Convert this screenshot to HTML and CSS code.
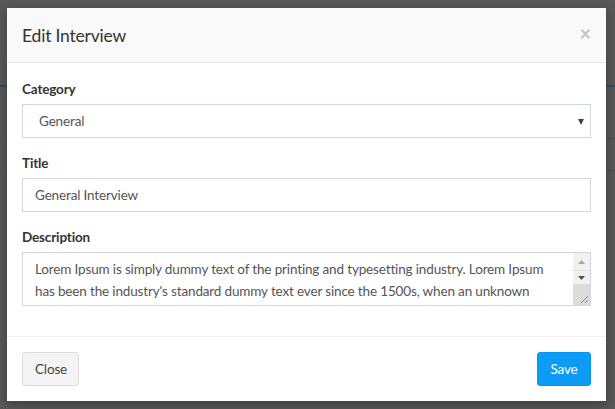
FILE: index.html
```html
<!DOCTYPE html>
<html lang="en">
<head>
<meta charset="utf-8">
<title>Edit Interview</title>
<link rel="stylesheet" href="styles.css">
</head>
<body>
<div class="backdrop">
  <div class="modal">
    <div class="modal-header">
      <h4 class="modal-title">Edit Interview</h4>
      <span class="close">&times;</span>
    </div>
    <div class="modal-body">
      <div class="form-group">
        <label class="label">Category</label>
        <div class="select-wrap">
          <select class="form-control select">
            <option>General</option>
          </select>
        </div>
      </div>
      <div class="form-group">
        <label class="label">Title</label>
        <input class="form-control" type="text" value="General Interview">
      </div>
      <div class="form-group">
        <label class="label">Description</label>
        <div class="textarea-wrap">
          <textarea class="form-control textarea">Lorem Ipsum is simply dummy text of the printing and typesetting industry. Lorem Ipsum has been the industry's standard dummy text ever since the 1500s, when an unknown printer took a galley of type and scrambled it to make a type specimen book. It has survived not only five centuries, but also the leap into electronic typesetting, remaining essentially unchanged.</textarea>
          <div class="scrollbar">
            <div class="sb-btn sb-up">
              <svg width="7" height="4" viewBox="0 0 7 4"><path d="M0 4 L3.5 0 L7 4 Z" fill="#a8a8a8"/></svg>
            </div>
            <div class="sb-btn sb-down">
              <svg width="7" height="4" viewBox="0 0 7 4"><path d="M0 0 L7 0 L3.5 4 Z" fill="#505050"/></svg>
            </div>
            <div class="sb-rest">
              <svg class="grip" width="9" height="9" viewBox="0 0 9 9"><path d="M1 8 L8 1 M5 8 L8 5" stroke="#8a8a8a" stroke-width="1" fill="none"/></svg>
            </div>
          </div>
        </div>
      </div>
    </div>
    <div class="modal-footer">
      <button class="btn btn-default">Close</button>
      <button class="btn btn-primary">Save</button>
    </div>
  </div>
</div>
</body>
</html>
```
FILE: styles.css
```css
html, body {
  margin: 0;
  padding: 0;
  height: 100%;
}
body {
  background-color: #575757;
  background-image:
    linear-gradient(#2f4b5a, #2f4b5a),
    linear-gradient(#505050, #505050),
    linear-gradient(#505050, #505050);
  background-size: 100% 2px, 100% 1px, 100% 1px;
  background-position: 0 85px, 0 138px, 0 170px;
  background-repeat: no-repeat;
  font-family: Lato, "Noto Sans", sans-serif;
  font-size: 13.5px;
  letter-spacing: -0.15px;
  color: #333;
}
.backdrop {
  padding: 8px 9px 8px 7px;
}
.modal {
  background: #fff;
  height: 393px;
  display: flex;
  flex-direction: column;
  box-shadow: 0 3px 9px rgba(0,0,0,0.3);
}
.modal-header {
  background: #f9f9f9;
  border-bottom: 1px solid #e8e8e8;
  height: 55px;
  box-sizing: border-box;
  padding: 0 15px;
  display: flex;
  align-items: center;
  justify-content: space-between;
}
.modal-title {
  margin: 0;
  font-size: 17.5px;
  font-weight: 400;
  letter-spacing: -0.2px;
  color: #333;
}
.close {
  font-size: 20px;
  font-weight: 700;
  color: #c4c4c4;
  line-height: 1;
  margin-top: -4px;
}
.modal-body {
  flex: 1;
  padding: 16px 15px 0;
  overflow: hidden;
}
.form-group {
  margin-bottom: 15px;
}
.label {
  display: block;
  font-weight: 700;
  font-size: 13.5px;
  line-height: 20px;
  margin-bottom: 5px;
  color: #333;
}
.form-control {
  display: block;
  width: 100%;
  box-sizing: border-box;
  height: 34px;
  border: 1px solid #d2d6de;
  border-radius: 0;
  background: #fff;
  padding: 6px 12px;
  font-family: inherit;
  font-size: 13.5px;
  letter-spacing: -0.15px;
  color: #555;
  outline: none;
  margin: 0;
}
.select-wrap {
  position: relative;
}
.select-wrap::after {
  content: "";
  position: absolute;
  right: 7px;
  top: 15px;
  border-left: 3.5px solid transparent;
  border-right: 3.5px solid transparent;
  border-top: 6px solid #444;
  pointer-events: none;
}
.select {
  -webkit-appearance: none;
  appearance: none;
  padding-left: 16px;
}
.textarea-wrap {
  position: relative;
}
.textarea {
  height: 54px;
  resize: none;
  line-height: 22px;
  padding: 5px 29px 5px 12px;
  overflow: hidden;
}
.scrollbar {
  position: absolute;
  top: 1px;
  right: 1px;
  bottom: 1px;
  width: 17px;
  display: flex;
  flex-direction: column;
  background: #f1f1f1;
}
.sb-btn {
  display: flex;
  align-items: center;
  justify-content: center;
}
.sb-up {
  height: 17px;
  border-bottom: 1px solid #e2e2e2;
}
.sb-down {
  height: 13px;
}
.sb-rest {
  flex: 1;
  background: #dcdcdc;
  display: flex;
  align-items: flex-end;
  justify-content: flex-end;
}
.grip {
  display: block;
  margin: 0 1px 1px 0;
}
.modal-footer {
  border-top: 1px solid #f0f0f0;
  padding: 15px;
  display: flex;
  justify-content: space-between;
}
.btn {
  height: 34px;
  padding: 6px 12px;
  font-family: inherit;
  font-size: 13.5px;
  letter-spacing: -0.15px;
  border-radius: 3px;
  border: 1px solid transparent;
  cursor: pointer;
}
.btn-default {
  background: #f4f4f4;
  border-color: #ddd;
  color: #444;
  width: 57px;
}
.btn-primary {
  background: #0c9bf5;
  border-color: #0a93ea;
  color: #fff;
  width: 54px;
}
```
